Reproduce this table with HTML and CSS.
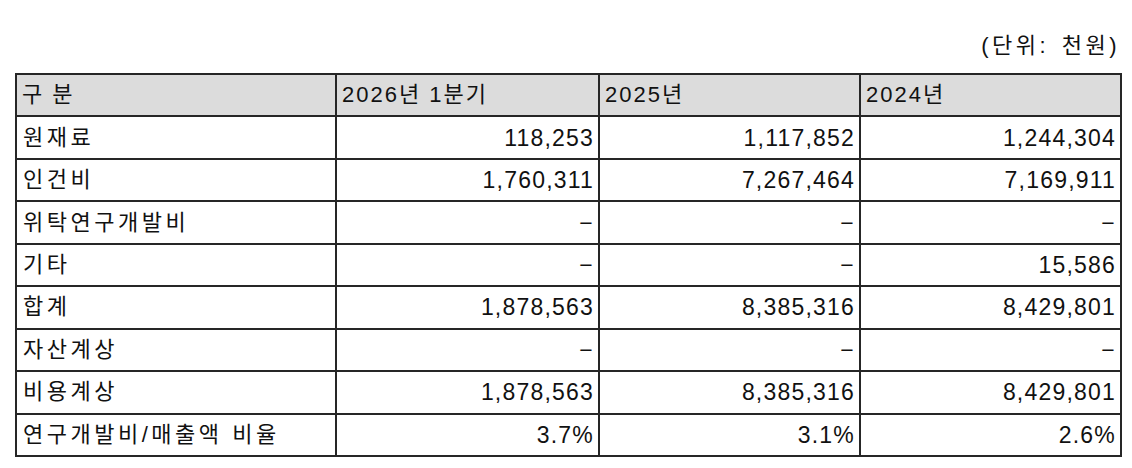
FILE: index.html
```html
<!DOCTYPE html>
<html lang="ko">
<head>
<meta charset="utf-8">
<link rel="stylesheet" href="styles.css">
</head>
<body>
<div class="wrap">
  <div class="unit">(단위: 천원)</div>
  <table class="rd">
    <colgroup>
      <col class="c1"><col class="c2"><col class="c3"><col class="c4">
    </colgroup>
    <thead>
      <tr><th>구 분</th><th>2026년 1분기</th><th>2025년</th><th>2024년</th></tr>
    </thead>
    <tbody>
      <tr><td>원재료</td><td class="num">118,253</td><td class="num">1,117,852</td><td class="num">1,244,304</td></tr>
      <tr><td>인건비</td><td class="num">1,760,311</td><td class="num">7,267,464</td><td class="num">7,169,911</td></tr>
      <tr><td>위탁연구개발비</td><td class="num">−</td><td class="num">−</td><td class="num">−</td></tr>
      <tr><td>기타</td><td class="num">−</td><td class="num">−</td><td class="num">15,586</td></tr>
      <tr><td>합계</td><td class="num">1,878,563</td><td class="num">8,385,316</td><td class="num">8,429,801</td></tr>
      <tr><td>자산계상</td><td class="num">−</td><td class="num">−</td><td class="num">−</td></tr>
      <tr><td>비용계상</td><td class="num">1,878,563</td><td class="num">8,385,316</td><td class="num">8,429,801</td></tr>
      <tr><td>연구개발비/매출액 비율</td><td class="num">3.7%</td><td class="num">3.1%</td><td class="num">2.6%</td></tr>
    </tbody>
  </table>
</div>
</body>
</html>
```

FILE: styles.css
```css
html, body {
  margin: 0;
  padding: 0;
  background: #ffffff;
}
body {
  font-family: "Liberation Sans", "Noto Sans CJK KR", sans-serif;
  font-size: 22px;
  color: #111111;
}
.wrap {
  padding: 32px 12px 0 15px;
  width: 1105px;
}
.unit {
  text-align: right;
  height: 28px;
  line-height: 28px;
  letter-spacing: 3.5px;
  word-spacing: 3px;
  margin-bottom: 13px;
  padding-right: 0;
}
.rd {
  border-collapse: collapse;
  width: 1105px;
  table-layout: fixed;
}
.c1 { width: 320px; }
.c2 { width: 263px; }
.c3 { width: 261px; }
.c4 { width: 261px; }
.rd th, .rd td {
  border: 2px solid #262626;
  height: 40.45px;
  padding: 0 5px 0 6px;
  font-weight: normal;
  text-align: left;
  white-space: nowrap;
  letter-spacing: 3.5px;
  line-height: 26px;
  vertical-align: middle;
}
.rd th {
  background: #dcdcdc;
  padding-left: 5px;
  letter-spacing: 2px;
}
.rd td.num {
  text-align: right;
  font-size: 23px;
  letter-spacing: 1.2px;
  padding-right: 4px;
}
```
